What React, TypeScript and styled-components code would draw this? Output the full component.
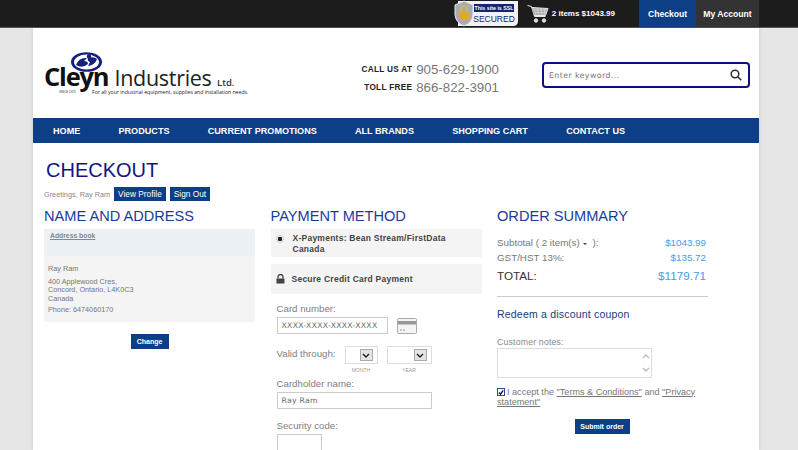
import styled, { createGlobalStyle } from 'styled-components'

const navy = '#0d3f86'
const headingBlue = '#1a3a9c'
const priceBlue = '#4a9be8'

const GlobalStyle = createGlobalStyle`
  html, body {
    margin: 0;
    padding: 0;
    height: 450px;
    overflow: hidden;
    background: #e6e6e6;
    font-family: "Liberation Sans", Arial, sans-serif;
  }
  * {
    box-sizing: border-box;
  }
`

const TopBar = styled.header`
  height: 28px;
  background: #1c1c1c;
  border-bottom: 1px solid #555;
  display: flex;
  justify-content: flex-end;
  padding-right: 39px;
`

const Badge = styled.svg`
  width: 64px;
  height: 27px;
  margin-right: 9px;
`

const CartInfo = styled.div`
  display: flex;
  align-items: center;
  gap: 3px;
  margin-right: 24px;
  color: #fff;
  font-size: 8px;
  font-weight: 700;
  white-space: nowrap;
`

const TopLink = styled.a<{ $active?: boolean }>`
  width: ${(p) => (p.$active ? '57px' : '63px')};
  height: 27px;
  display: flex;
  align-items: center;
  justify-content: center;
  color: #fff;
  font-size: 8.6px;
  font-weight: 700;
  background: ${(p) => (p.$active ? navy : '#333')};
`

const Wrapper = styled.div`
  width: 726px;
  margin-left: 33px;
  background: #fff;
  box-shadow: 0 0 3px rgba(0, 0, 0, 0.15);
  height: 422px;
  overflow: hidden;
`

const Header = styled.div`
  height: 90px;
  display: flex;
  align-items: flex-start;
`

const Logo = styled.svg`
  width: 214px;
  height: 60px;
  margin: 22px 0 0 10px;
  flex: none;
`

const Phones = styled.div`
  margin: 32px 0 0 102px;
  width: 140px;
  flex: none;
  display: flex;
  flex-direction: column;
`

const PhoneRow = styled.div`
  height: 18px;
  display: flex;
  align-items: center;
  justify-content: flex-end;
  gap: 4px;
  white-space: nowrap;
`

const PhoneLabel = styled.span`
  font-size: 8.2px;
  font-weight: 700;
  color: #222;
  letter-spacing: 0.3px;
`

const PhoneNumber = styled.span`
  font-size: 13.3px;
  color: #777;
`

const Search = styled.div`
  width: 208px;
  height: 26px;
  margin: 34px 0 0 43px;
  flex: none;
  border: 2px solid #10107a;
  border-radius: 4px;
  display: flex;
  align-items: center;
  justify-content: space-between;
  padding: 0 6px 0 5px;
  letter-spacing: 0.4px;
  color: #777;
  font-family: "DejaVu Sans", sans-serif;
  font-size: 7.85px;
`

const Nav = styled.nav`
  height: 25px;
  background: ${navy};
  display: flex;
  align-items: center;
  gap: 38.2px;
  padding-left: 20px;
`

const NavLink = styled.a`
  color: #fff;
  font-size: 9.1px;
  font-weight: 700;
`

const Main = styled.main`
  padding: 16px 0 0 11px;
`

const Title = styled.h1`
  margin: 0 0 0 2px;
  font-size: 20px;
  line-height: 23px;
  font-weight: 400;
  color: #14147e;
`

const Greeting = styled.div`
  display: flex;
  align-items: center;
  height: 14px;
  margin-top: 5px;
  font-size: 7.3px;
  color: #888;
`

const ProfileButton = styled.a`
  height: 14px;
  margin-left: 4px;
  padding: 0 4px;
  display: flex;
  align-items: center;
  font-size: 8.3px;
  color: #fff;
  background: ${navy};
`

const Columns = styled.div`
  display: grid;
  grid-template-columns: 211px 211px 211px;
  column-gap: 15.5px;
  margin-top: 7px;
`

const Column = styled.section``

const Heading = styled.h2`
  margin: 0;
  font-size: 14.6px;
  line-height: 16px;
  font-weight: 400;
  color: ${headingBlue};
`

const AddressBookBar = styled.div`
  height: 27px;
  margin-top: 5px;
  padding: 3px 6px;
  background: #ebf1f4;
  font-size: 6.8px;
  font-weight: 700;
  color: #888;
  text-decoration: underline;
`

const AddressBody = styled.div`
  height: 66px;
  background: #f4f4f4;
  padding: 9px 4px;
  font-size: 7.25px;
  color: #777;
  line-height: 8.5px;
`

const AddressName = styled.div`
  margin-bottom: 4px;
  font-size: 7.3px;
`

const AddressPhone = styled.div`
  margin-top: 3px;
`

const CenteredAction = styled.div`
  display: flex;
  justify-content: center;
`

const ActionButton = styled.a<{ $wide?: boolean }>`
  width: ${(p) => (p.$wide ? '55px' : '38px')};
  height: 15px;
  display: flex;
  align-items: center;
  justify-content: center;
  background: ${navy};
  color: #fff;
  font-size: 7px;
  font-weight: 700;
`

const ChangeWrap = styled(CenteredAction)`
  margin-top: 12px;
`

const SubmitWrap = styled(CenteredAction)`
  margin-top: 11.5px;
  padding-right: 1px;
`

const MethodBox = styled.div<{ $tall?: boolean }>`
  margin-top: ${(p) => (p.$tall ? '7px' : '5px')};
  height: ${(p) => (p.$tall ? '30px' : '28px')};
  background: #f4f4f4;
  display: flex;
  align-items: ${(p) => (p.$tall ? 'center' : 'flex-start')};
  padding: ${(p) => (p.$tall ? '0 0 0 5px' : '4px 0 0 5px')};
  gap: 7px;
  font-size: 8.5px;
  line-height: 11px;
  font-weight: 700;
  color: #444;
  letter-spacing: 0.25px;
`

const Radio = styled.span`
  flex: none;
  width: 8px;
  height: 8px;
  margin: 2px 2px 0 0;
  border-radius: 50%;
  border: 1px solid #ccc;
  background: radial-gradient(circle, #222 0 2px, #fff 2.6px);
`

const Form = styled.div`
  padding-left: 6px;
`

const FieldLabel = styled.div<{ $top: number }>`
  margin-top: ${(p) => p.$top}px;
  font-size: 9.7px;
  line-height: 12px;
  color: #808080;
`

const InlineRow = styled.div`
  display: flex;
  align-items: center;
  margin-top: 2px;
  gap: 9px;
`

const TextField = styled.div<{ $w: number; $h?: number; $top?: number }>`
  width: ${(p) => p.$w}px;
  height: ${(p) => p.$h ?? 17}px;
  margin-top: ${(p) => p.$top ?? 0}px;
  border: 1px solid #ccc;
  overflow: hidden;
  white-space: nowrap;
  display: flex;
  align-items: center;
  padding-left: 4px;
  letter-spacing: 0.3px;
  color: #666;
  font-family: "DejaVu Sans", sans-serif;
  font-size: 7.7px;
`

const ValidRow = styled.div`
  display: flex;
  margin-top: 12px;
`

const ValidLabel = styled.div`
  width: 68px;
  padding-top: 2px;
  font-size: 9.7px;
  line-height: 12px;
  color: #808080;
`

const SelectColumn = styled.div`
  width: 42px;
`

const SelectBox = styled.div<{ $w: number }>`
  width: ${(p) => p.$w}px;
  height: 18px;
  border: 1px solid #ddd;
  display: flex;
  align-items: center;
  justify-content: flex-end;
  padding-right: 4px;
`

const SelectArrow = styled.span`
  width: 13px;
  height: 12px;
  background: #e4e4e4;
  border: 1px solid #aaa;
  display: flex;
  align-items: center;
  justify-content: center;
`

const SelectCaption = styled.div<{ $w: number }>`
  width: ${(p) => p.$w}px;
  margin-top: 3px;
  text-align: center;
  font-size: 5px;
  color: #999;
`

const Totals = styled.div`
  margin-top: 11px;
  padding-bottom: 10px;
  border-bottom: 1px solid #ccc;
`

const TotalRow = styled.div<{ $big?: boolean }>`
  display: flex;
  justify-content: space-between;
  align-items: center;
  height: ${(p) => (p.$big ? '21px' : '15px')};
  font-size: ${(p) => (p.$big ? '11.7px' : '9.8px')};
  color: ${(p) => (p.$big ? '#333' : '#777')};
  padding-right: 2px;
`

const Price = styled.span`
  color: ${priceBlue};
`

const Caret = styled.span`
  display: inline-block;
  width: 0;
  height: 0;
  margin: 0 3px 1px 3px;
  border-left: 2px solid transparent;
  border-right: 2px solid transparent;
  border-top: 2px solid #444;
`

const Coupon = styled.div`
  margin-top: 11px;
  font-size: 10.5px;
  line-height: 13px;
  letter-spacing: 0.2px;
  color: #1a3a7c;
`

const NotesLabel = styled.div`
  margin-top: 15.5px;
  font-size: 8.7px;
  line-height: 10px;
  letter-spacing: 0.2px;
  color: #888;
`

const NotesField = styled.div`
  width: 155px;
  height: 30px;
  margin-top: 1px;
  border: 1px solid #ddd;
  display: flex;
  flex-direction: column;
  align-items: flex-end;
  justify-content: space-between;
  padding: 5px 1px 5px 0;
`

const Accept = styled.div`
  margin-top: 9px;
  font-size: 9.1px;
  line-height: 10.5px;
  color: #777;
`

const Check = styled.span`
  display: inline-flex;
  align-items: center;
  justify-content: center;
  width: 8px;
  height: 8px;
  margin-right: 2px;
  border: 1px solid #2a4a9a;
  vertical-align: -1px;
  background: #fff;
`

const TermsLink = styled.a`
  color: #777;
  text-decoration: underline;
`

function SslBadge() {
  return (
    <Badge viewBox="0 0 64 27">
      <path d="M4 1h60v20q0 5-5 5H4z" fill="#f2f2f2" />
      <rect x="20" y="4" width="40" height="8" fill="#14246e" />
      <text x="40" y="10" fontSize="5.300" fontWeight="700" fill="#fff" textAnchor="middle" fontFamily="Liberation Sans">This site is SSL</text>
      <text x="40" y="22" fontSize="8.500" fill="#14246e" textAnchor="middle" fontFamily="Liberation Sans">SECURED</text>
      <path d="M10 1l9 4v10q-1 8-9 11q-8-3-9-11V5z" fill="#a9adb3" stroke="#e8e8e8" />
      <path d="M7 12V9a3 3 0 016 0v3" fill="none" stroke="#d9b54a" strokeWidth="1.500" />
      <rect x="5" y="12" width="10" height="8" fill="#e0a92a" />
    </Badge>
  )
}

function CartIcon() {
  return (
    <svg width="22" height="20" viewBox="0 0 22 20" fill="none" stroke="#e8e8e8">
      <path d="M0.500 1.500l4 1 3 10h11" strokeWidth="1" />
      <path d="M4.500 3.500l16.500 1-2.500 7H7" fill="#aaa" strokeWidth="1" />
      <path d="M7 6h13M8 8.500h11M6 3.500l3 8M10 4l2 7.500M14 4l1 7.500M18 4.500l-1 7" strokeWidth="0.500" />
      <circle cx="9" cy="16.500" r="1.700" fill="#ddd" />
      <circle cx="17" cy="16.500" r="1.700" fill="#ddd" />
    </svg>
  )
}

function CleynLogo() {
  return (
    <Logo viewBox="0 0 214 60">
      <ellipse cx="43.500" cy="12" rx="15.500" ry="9.800" fill="#14207c" />
      <ellipse cx="43.500" cy="12" rx="12.500" ry="7.500" fill="#fff" />
      <path d="M33 15q3-8 11-7l-3 3q4 0 4 3q-6 5-12 1zM54 9q-2 6-9 7l2-4q-3-1-2-4q6-2 9 1z" fill="#14207c" />
      <circle cx="46" cy="6.500" r="2.200" fill="#14207c" />
      <text x="1" y="36" fontSize="25.500" fontWeight="700" fontFamily="Open Sans" fill="#111" letterSpacing="-1.200">Cleyn</text>
      <text x="71.500" y="36" fontSize="21.500" fontFamily="Open Sans" fill="#222" letterSpacing="-0.300">Industries</text>
      <text x="174" y="36" fontSize="9.500" fontWeight="600" fontFamily="Open Sans" fill="#333">Ltd.</text>
      <text x="16" y="43" fontSize="3" fontFamily="Liberation Sans" fill="#333">SINCE 1975</text>
      <text x="49" y="43.500" fontSize="5.150" fontFamily="Open Sans" fill="#222">For all your industrial equipment, supplies and installation needs.</text>
    </Logo>
  )
}

function SearchIcon() {
  return (
    <svg width="12" height="12" viewBox="0 0 12 12" fill="none" stroke="#2b2b2b" strokeWidth="1.500">
      <circle cx="5" cy="5" r="3.800" />
      <path d="M8 8l3.300 3.300" />
    </svg>
  )
}

function LockIcon() {
  return (
    <svg width="9" height="10" viewBox="0 0 9 10">
      <path d="M2 4.500V3a2.500 2.500 0 015 0v1.500" fill="none" stroke="#444" strokeWidth="1.300" />
      <rect x="0.500" y="4.500" width="8" height="5" fill="#444" />
    </svg>
  )
}

function CardIcon() {
  return (
    <svg width="20" height="16" viewBox="0 0 20 16">
      <rect x="0.500" y="0.500" width="19" height="15" rx="1" fill="#f4f4f4" stroke="#aaa" />
      <rect x="1" y="3" width="18" height="3.500" fill="#999" />
      <path d="M3 12h2M6 12h2" stroke="#999" />
    </svg>
  )
}

function Chevron({ color, up }: { color: string; up?: boolean }) {
  return (
    <svg width="8" height="5" viewBox="0 0 8 5" fill="none" stroke={color} strokeWidth="1.400">
      <path d={up ? 'M1 4l3-3 3 3' : 'M1 1l3 3 3-3'} />
    </svg>
  )
}

export default function App() {
  return (
    <>
      <GlobalStyle />
      <TopBar>
        <SslBadge />
        <CartInfo>
          <CartIcon />
          2 items $1043.99
        </CartInfo>
        <TopLink $active>Checkout</TopLink>
        <TopLink>My Account</TopLink>
      </TopBar>
      <Wrapper>
        <Header>
          <CleynLogo />
          <Phones>
            <PhoneRow>
              <PhoneLabel>CALL US AT</PhoneLabel>
              <PhoneNumber>905-629-1900</PhoneNumber>
            </PhoneRow>
            <PhoneRow>
              <PhoneLabel>TOLL FREE</PhoneLabel>
              <PhoneNumber>866-822-3901</PhoneNumber>
            </PhoneRow>
          </Phones>
          <Search>
            Enter keyword...
            <SearchIcon />
          </Search>
        </Header>
        <Nav>
          <NavLink>HOME</NavLink>
          <NavLink>PRODUCTS</NavLink>
          <NavLink>CURRENT PROMOTIONS</NavLink>
          <NavLink>ALL BRANDS</NavLink>
          <NavLink>SHOPPING CART</NavLink>
          <NavLink>CONTACT US</NavLink>
        </Nav>
        <Main>
          <Title>CHECKOUT</Title>
          <Greeting>
            Greetings, Ray Ram
            <ProfileButton>View Profile</ProfileButton>
            <ProfileButton>Sign Out</ProfileButton>
          </Greeting>
          <Columns>
            <Column>
              <Heading>NAME AND ADDRESS</Heading>
              <AddressBookBar>Address book</AddressBookBar>
              <AddressBody>
                <AddressName>Ray Ram</AddressName>
                400 Applewood Cres,
                <br />
                Concord, Ontario, L4K0C3
                <br />
                Canada
                <AddressPhone>Phone: 6474060170</AddressPhone>
              </AddressBody>
              <ChangeWrap>
                <ActionButton>Change</ActionButton>
              </ChangeWrap>
            </Column>
            <Column>
              <Heading>PAYMENT METHOD</Heading>
              <MethodBox>
                <Radio />
                <span>
                  X-Payments: Bean Stream/FirstData
                  <br />
                  Canada
                </span>
              </MethodBox>
              <MethodBox $tall>
                <LockIcon />
                <span>Secure Credit Card Payment</span>
              </MethodBox>
              <Form>
                <FieldLabel $top={9}>Card number:</FieldLabel>
                <InlineRow>
                  <TextField $w={111}>XXXX-XXXX-XXXX-XXXX</TextField>
                  <CardIcon />
                </InlineRow>
                <ValidRow>
                  <ValidLabel>Valid through:</ValidLabel>
                  <SelectColumn>
                    <SelectBox $w={33}>
                      <SelectArrow>
                        <Chevron color="#123" />
                      </SelectArrow>
                    </SelectBox>
                    <SelectCaption $w={33}>MONTH</SelectCaption>
                  </SelectColumn>
                  <SelectColumn>
                    <SelectBox $w={45}>
                      <SelectArrow>
                        <Chevron color="#123" />
                      </SelectArrow>
                    </SelectBox>
                    <SelectCaption $w={45}>YEAR</SelectCaption>
                  </SelectColumn>
                </ValidRow>
                <FieldLabel $top={5}>Cardholder name:</FieldLabel>
                <TextField $w={155} $top={2}>Ray Ram</TextField>
                <FieldLabel $top={11}>Security code:</FieldLabel>
                <TextField $w={45} $h={20} $top={2} />
              </Form>
            </Column>
            <Column>
              <Heading>ORDER SUMMARY</Heading>
              <Totals>
                <TotalRow>
                  <span>
                    Subtotal ( 2 item(s)
                    <Caret /> ):
                  </span>
                  <Price>$1043.99</Price>
                </TotalRow>
                <TotalRow>
                  <span>GST/HST 13%:</span>
                  <Price>$135.72</Price>
                </TotalRow>
                <TotalRow $big>
                  <span>TOTAL:</span>
                  <Price>$1179.71</Price>
                </TotalRow>
              </Totals>
              <Coupon>Redeem a discount coupon</Coupon>
              <NotesLabel>Customer notes:</NotesLabel>
              <NotesField>
                <Chevron color="#bbb" up />
                <Chevron color="#bbb" />
              </NotesField>
              <Accept>
                <Check>
                  <svg width="7" height="7" viewBox="0 0 7 7" fill="none" stroke="#111" strokeWidth="1.500">
                    <path d="M1 3.500l2 2 3-4.500" />
                  </svg>
                </Check>
                I accept the <TermsLink>"Terms &amp; Conditions"</TermsLink> and <TermsLink>"Privacy</TermsLink>{' '}
                <TermsLink>statement"</TermsLink>
              </Accept>
              <SubmitWrap>
                <ActionButton $wide>Submit order</ActionButton>
              </SubmitWrap>
            </Column>
          </Columns>
        </Main>
      </Wrapper>
    </>
  )
}
